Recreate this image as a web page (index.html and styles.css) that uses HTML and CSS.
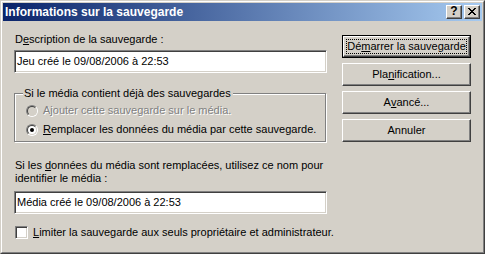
FILE: index.html
```html
<!DOCTYPE html>
<html lang="fr">
<head>
  <meta charset="UTF-8">
  <title>Informations sur la sauvegarde</title>
  <link rel="stylesheet" href="styles.css">
</head>
<body>
  <div class="window">
    <div class="window-inner">
      <div class="titlebar">
        <span class="title">Informations sur la sauvegarde</span>
        <div class="caption-buttons">
          <span class="cap-btn help">?</span>
          <span class="cap-btn close">
            <svg width="8" height="7" viewBox="0 0 8 7" shape-rendering="crispEdges">
              <path fill="#000" d="M0 0h2v1H0z M6 0h2v1H6z M1 1h2v1H1z M5 1h2v1H5z M2 2h4v1H2z M3 3h2v1H3z M2 4h4v1H2z M1 5h2v1H1z M5 5h2v1H5z M0 6h2v1H0z M6 6h2v1H6z"/>
            </svg>
          </span>
        </div>
      </div>

      <div class="client">
        <div class="main">
          <div class="label">D<u>e</u>scription de la sauvegarde :</div>
          <div class="edit">Jeu créé le 09/08/2006 à 22:53</div>

          <div class="group">
            <span class="group-title">Si le média contient déjà des sauvegardes</span>
            <div class="option disabled">
              <span class="radio"><span class="radio-inner"></span></span>
              <span>A<u>j</u>outer cette sauvegarde sur le média.</span>
            </div>
            <div class="option">
              <span class="radio"><span class="radio-inner checked"></span></span>
              <span><u>R</u>emplacer les données du média par cette sauvegarde.</span>
            </div>
          </div>

          <div class="label label-media">Si les <u>d</u>onnées du média sont remplacées, utilisez ce nom pour<br>identifier le média :</div>
          <div class="edit">Média créé le 09/08/2006 à 22:53</div>

          <div class="option check-row">
            <span class="checkbox"></span>
            <span><u>L</u>imiter la sauvegarde aux seuls propriétaire et administrateur.</span>
          </div>
        </div>

        <div class="buttons">
          <div class="btn default"><div class="btn-face">Dé<u>m</u>arrer la sauvegarde</div></div>
          <div class="btn"><div class="btn-face">Pla<u>n</u>ification...</div></div>
          <div class="btn"><div class="btn-face">A<u>v</u>ancé...</div></div>
          <div class="btn"><div class="btn-face">Annuler</div></div>
        </div>
      </div>
    </div>
  </div>
</body>
</html>
```

FILE: styles.css
```css
* {
  margin: 0;
  padding: 0;
  box-sizing: border-box;
}

body {
  background-color: #d4d0c8;
  font-family: 'Liberation Sans', Arial, sans-serif;
  font-size: 11px;
  line-height: 13px;
  color: #000;
}

u {
  text-decoration: underline;
  text-underline-offset: 1px;
}

/* window frame, 3px raised edge */
.window {
  width: 485px;
  height: 254px;
  border: 1px solid;
  border-color: #d4d0c8 #404040 #404040 #d4d0c8;
}

.window-inner {
  height: 100%;
  border: 1px solid;
  border-color: #fff #808080 #808080 #fff;
  padding: 1px;
}

.titlebar {
  height: 18px;
  margin-bottom: 1px;
  display: flex;
  align-items: center;
  justify-content: space-between;
  padding: 0 2px;
  background: linear-gradient(to right, #0a246a, #a6caf0);
}

.title {
  color: #fff;
  font-weight: bold;
  font-size: 12px;
}

.caption-buttons {
  display: flex;
  gap: 2px;
}

.cap-btn {
  width: 16px;
  height: 14px;
  display: flex;
  align-items: center;
  justify-content: center;
  background-color: #d4d0c8;
  border: 1px solid;
  border-color: #fff #404040 #404040 #fff;
  box-shadow: inset -1px -1px 0 #808080;
}

.help {
  font-weight: bold;
  font-size: 12px;
  line-height: 11px;
  padding-bottom: 1px;
}

.close svg {
  display: block;
  margin-top: -1px;
}

/* client area */
.client {
  height: 229px;
  display: flex;
  padding: 0 10px 0 11px;
}

.main {
  width: 313px;
  padding-top: 11px;
}

.label {
  height: 13px;
  padding-left: 1px;
}

.label-media {
  height: 26px;
  margin-top: 17px;
}

.edit {
  height: 23px;
  margin-top: 4px;
  padding-left: 2px;
  display: flex;
  align-items: center;
  background-color: #fff;
  border: 1px solid;
  border-color: #808080 #fff #fff #808080;
  box-shadow: inset 1px 1px 0 #404040, inset -1px -1px 0 #d4d0c8;
}

.label-media + .edit {
  margin-top: 6px;
}

/* etched group box */
.group {
  position: relative;
  width: 312px;
  height: 49px;
  margin-top: 20px;
  padding: 10px 0 0 11px;
  border: 1px solid #808080;
  box-shadow: 1px 1px 0 #fff, inset 1px 1px 0 #fff;
  display: flex;
  flex-direction: column;
  gap: 6px;
}

.group-title {
  position: absolute;
  top: -7px;
  left: 8px;
  padding: 0 2px 0 1px;
  background-color: #d4d0c8;
}

.option {
  display: flex;
  align-items: center;
  height: 13px;
  white-space: nowrap;
}

.option.disabled {
  color: #808080;
  text-shadow: 1px 1px 0 #fff;
}

.radio {
  width: 12px;
  height: 12px;
  margin-right: 5px;
  border-radius: 50%;
  border: 1px solid;
  border-color: #808080 #fff #fff #808080;
  flex-shrink: 0;
}

.radio-inner {
  display: flex;
  align-items: center;
  justify-content: center;
  width: 10px;
  height: 10px;
  border-radius: 50%;
  border: 1px solid;
  border-color: #404040 #d4d0c8 #d4d0c8 #404040;
  background-color: #d4d0c8;
}

.radio-inner.checked {
  background-color: #fff;
}

.radio-inner.checked::after {
  content: "";
  width: 4px;
  height: 4px;
  border-radius: 50%;
  background-color: #000;
}

.check-row {
  margin-top: 12px;
  padding-left: 1px;
}

.checkbox {
  width: 13px;
  height: 13px;
  margin-right: 5px;
  flex-shrink: 0;
  background-color: #fff;
  border: 1px solid;
  border-color: #808080 #fff #fff #808080;
  box-shadow: inset 1px 1px 0 #404040, inset -1px -1px 0 #d4d0c8;
}

/* push buttons */
.buttons {
  width: 129px;
  margin-left: 15px;
  padding-top: 13px;
  display: flex;
  flex-direction: column;
  gap: 5px;
}

.btn {
  height: 23px;
  border: 1px solid;
  border-color: #fff #404040 #404040 #fff;
  box-shadow: inset -1px -1px 0 #808080;
}

.btn-face {
  height: 100%;
  display: flex;
  align-items: center;
  justify-content: center;
  padding-bottom: 1px;
}

.btn.default {
  border: 1px solid #000;
  box-shadow: none;
}

.btn.default .btn-face {
  position: relative;
  border: 1px solid;
  border-color: #fff #404040 #404040 #fff;
  box-shadow: inset -1px -1px 0 #808080;
}

.btn.default .btn-face::after {
  content: "";
  position: absolute;
  inset: 2px;
  border: 1px dotted #000;
}
```
